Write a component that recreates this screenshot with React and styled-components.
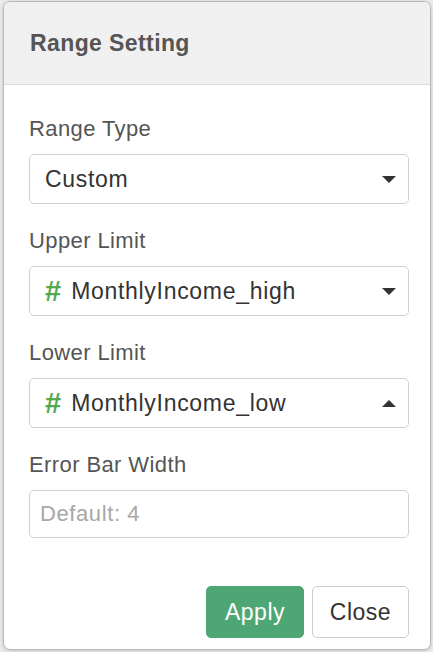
import React from "react";
import styled, { createGlobalStyle } from "styled-components";

const Global = createGlobalStyle`
  html, body { margin: 0; padding: 0; }
  body {
    background: #ececec;
    font-family: "Liberation Sans", Arial, Helvetica, sans-serif;
    width: 433px;
    height: 652px;
    overflow: hidden;
  }
  * { box-sizing: border-box; }
`;

const Popover = styled.div`
  margin: 1px 0 0 3px;
  width: 428px;
  height: 649px;
  background: #fff;
  border: 1px solid #b9b9b9;
  border-radius: 7px;
  box-shadow: 0 1px 4px rgba(0, 0, 0, 0.18);
  overflow: hidden;
  display: flex;
  flex-direction: column;
`;

const Header = styled.div`
  background: #f0f0f0;
  border-bottom: 1px solid #dcdcdc;
  padding: 26px 20px 26px 26px;
`;

const Title = styled.h3`
  margin: 0;
  font-size: 23px;
  line-height: 30px;
  font-weight: 700;
  color: #555;
  letter-spacing: 0.4px;
`;

const Body = styled.div`
  flex: 1;
  display: flex;
  flex-direction: column;
  padding: 29px 21px 11px 25px;
`;

const Field = styled.div`
  display: flex;
  flex-direction: column;
  margin-bottom: 22px;
`;

const Label = styled.label`
  font-size: 22px;
  line-height: 30px;
  color: #555;
  letter-spacing: 0.4px;
  margin-bottom: 10px;
`;

const SelectBox = styled.div`
  height: 50px;
  border: 1.5px solid #d0d0d0;
  border-radius: 5px;
  display: flex;
  align-items: center;
  padding: 0 12px 0 15px;
  font-size: 23px;
  letter-spacing: 0.7px;
  color: #333;
  background: #fff;
`;

const Value = styled.span`
  flex: 1;
  display: flex;
  align-items: center;
  white-space: nowrap;
`;

const Hash = styled.span`
  color: #56a84c;
  font-weight: 700;
  font-size: 29px;
  line-height: 1;
  letter-spacing: 0;
  margin-right: 10px;
`;

const Caret = styled.span`
  width: 0;
  height: 0;
  border-left: 7px solid transparent;
  border-right: 7px solid transparent;
  ${(p) =>
    p.$up
      ? "border-bottom: 7px solid #333;"
      : "border-top: 7px solid #333;"}
`;

const TextInput = styled.input`
  height: 48px;
  border: 1.5px solid #d0d0d0;
  border-radius: 5px;
  padding: 0 10px;
  font-family: "Liberation Sans", Arial, Helvetica, sans-serif;
  font-size: 22px;
  letter-spacing: 0.6px;
  color: #333;
  outline: none;
  &::placeholder { color: #a8a8a8; }
`;

const Footer = styled.div`
  margin-top: 26px;
  display: flex;
  justify-content: flex-end;
  gap: 8px;
`;

const Button = styled.button`
  height: 52px;
  width: ${(p) => (p.$primary ? "98px" : "97px")};
  border-radius: 5px;
  font-family: "Liberation Sans", Arial, Helvetica, sans-serif;
  font-size: 23px;
  letter-spacing: 0.5px;
  cursor: pointer;
  border: ${(p) => (p.$primary ? "1px solid #4ea674" : "1.5px solid #cccccc")};
  background: ${(p) => (p.$primary ? "#4ea674" : "#fff")};
  color: ${(p) => (p.$primary ? "#fff" : "#333")};
`;

function Select({ children, up, column }) {
  return (
    <SelectBox>
      <Value>
        {column && <Hash>#</Hash>}
        {children}
      </Value>
      <Caret $up={up} />
    </SelectBox>
  );
}

export default function App() {
  return (
    <>
      <Global />
      <Popover>
        <Header>
          <Title>Range Setting</Title>
        </Header>
        <Body>
          <Field>
            <Label>Range Type</Label>
            <Select>Custom</Select>
          </Field>
          <Field>
            <Label>Upper Limit</Label>
            <Select column>MonthlyIncome_high</Select>
          </Field>
          <Field>
            <Label>Lower Limit</Label>
            <Select column up>MonthlyIncome_low</Select>
          </Field>
          <Field>
            <Label>Error Bar Width</Label>
            <TextInput placeholder="Default: 4" />
          </Field>
          <Footer>
            <Button $primary>Apply</Button>
            <Button>Close</Button>
          </Footer>
        </Body>
      </Popover>
    </>
  );
}
